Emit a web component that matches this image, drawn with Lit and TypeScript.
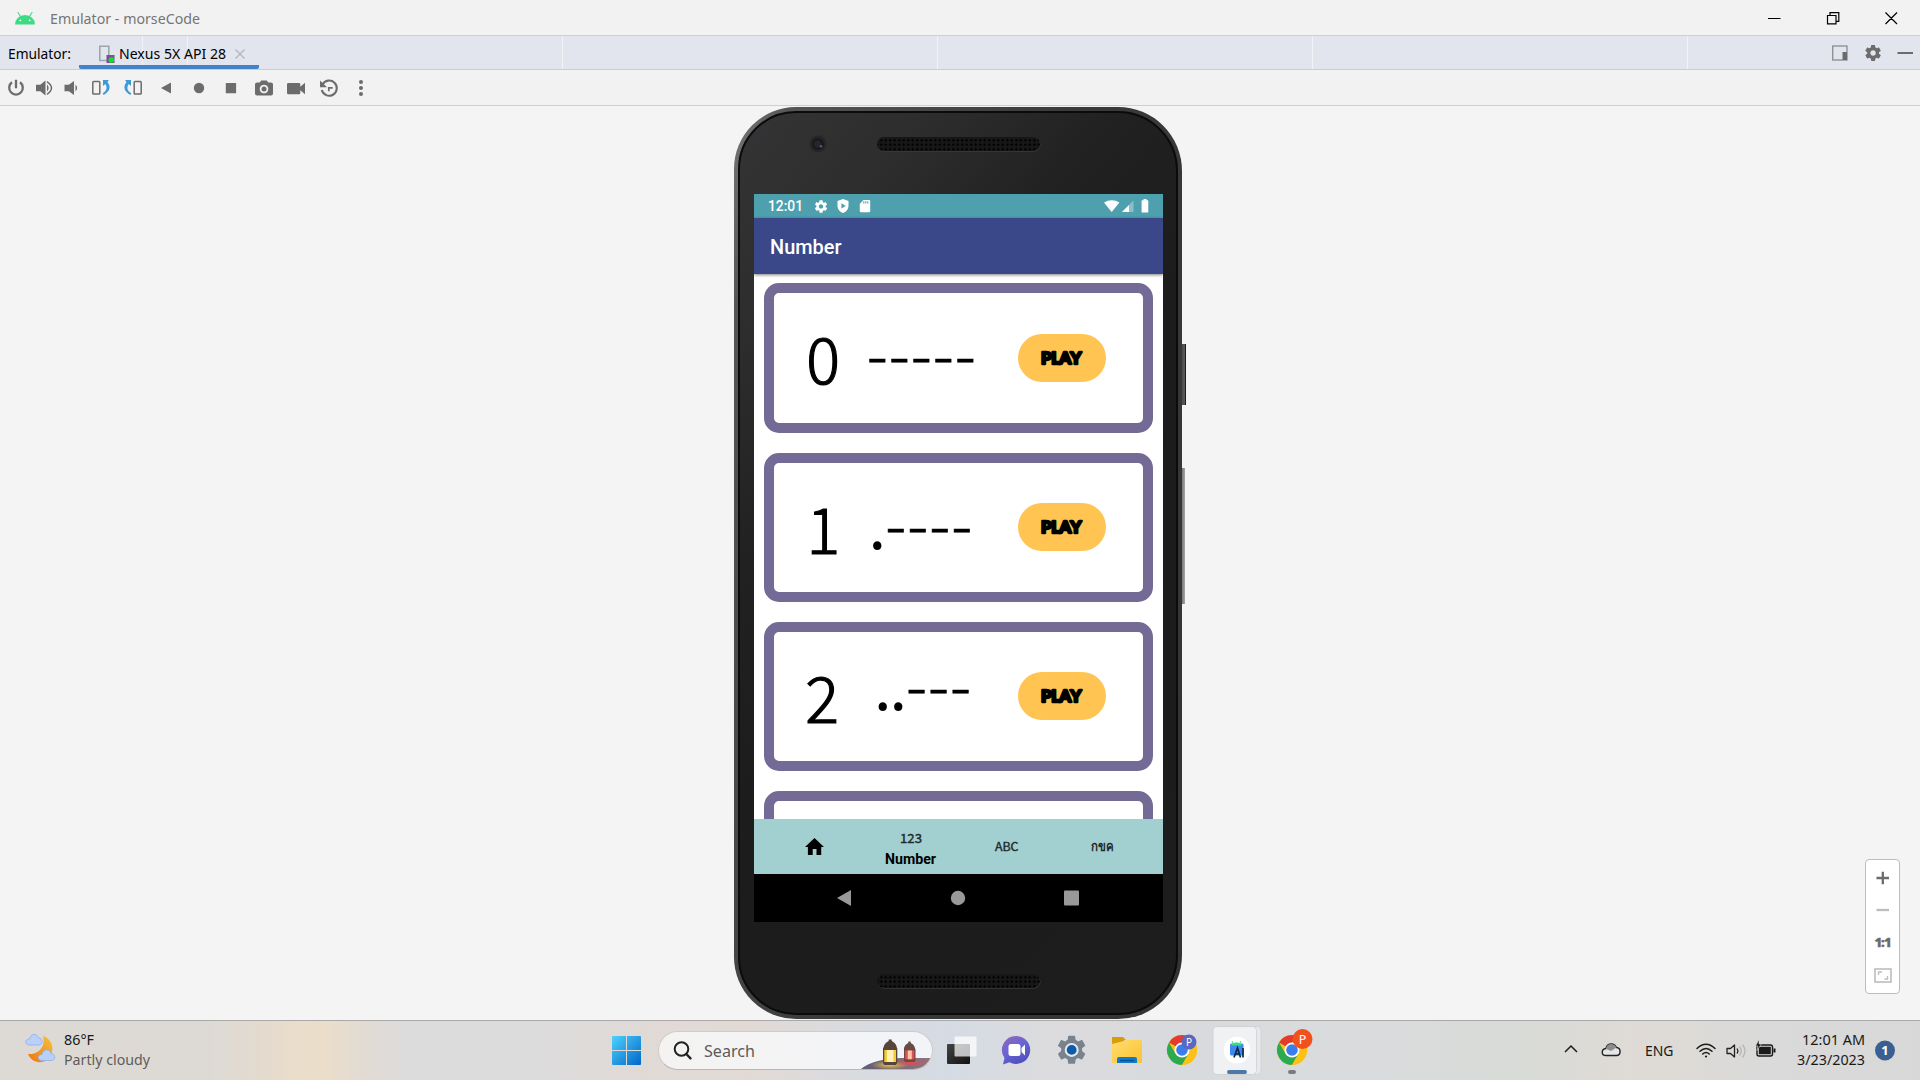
import { LitElement, html, svg, css } from "lit";
import { customElement, property } from "lit/decorators.js";

/** One line of text set to a known advance width; baseline sits 16px below the top. */
const label = (text: string, width: number, size: number, cls = "") => html`
  <svg class="label ${cls}" width=${width} height="22" viewBox="0 0 ${width} 22">
    <text x="0" y="16" font-size=${size} textLength=${width} lengthAdjust="spacingAndGlyphs">${text}</text>
  </svg>`;

const icon = (w: number, h: number, body: unknown, cls = "") => html`
  <svg class="icon ${cls}" width=${w} height=${h} viewBox="0 0 ${w} ${h}">${body}</svg>`;

const labelStyles = css`
  svg { display: block; flex: none; overflow: visible; }
  .label text { fill: currentColor; }
`;

const GEAR = "M19.43 12.98c.04-.32.07-.64.07-.98s-.03-.66-.07-.98l2.11-1.65c.19-.15.24-.42.12-.64l-2-3.46c-.12-.22-.39-.3-.61-.22l-2.49 1c-.52-.4-1.08-.73-1.69-.98l-.38-2.65C14.46 2.18 14.25 2 14 2h-4c-.25 0-.46.18-.49.42l-.38 2.65c-.61.25-1.17.59-1.69.98l-2.49-1c-.23-.09-.49 0-.61.22l-2 3.46c-.13.22-.07.49.12.64l2.11 1.65c-.04.32-.07.65-.07.98s.03.66.07.98l-2.11 1.65c-.19.15-.24.42-.12.64l2 3.46c.12.22.39.3.61.22l2.49-1c.52.4 1.08.73 1.69.98l.38 2.65c.03.24.24.42.49.42h4c.25 0 .46-.18.49-.42l.38-2.65c.61-.25 1.17-.59 1.69-.98l2.49 1c.23.09.49 0 .61-.22l2-3.46c.12-.22.07-.49-.12-.64l-2.11-1.65zM12 15.5c-1.93 0-3.5-1.57-3.5-3.5s1.57-3.5 3.5-3.5 3.5 1.57 3.5 3.5-1.57 3.5-3.5 3.5z";

interface Code { digit: string; center: number; dots: number[]; dashes: number[]; baseline: number; }

@customElement("morse-card")
export class MorseCard extends LitElement {
  @property({ attribute: false }) code?: Code;
  static styles = [labelStyles, css`
    :host { display: block; flex: none; box-sizing: border-box; width: 389px; height: 149.2px; border: 10px solid #736a95; border-radius: 15px; background: #fff; }
    .row { display: grid; grid-template-columns: 70px 174px 87.5px; height: 100%; }
    .play { margin-top: 40.3px; height: 48px; border-radius: 24px; background: #ffc451; display: flex; justify-content: center; align-items: center; }
    .play text { font: 900 17px "Lato", sans-serif; fill: #000; stroke: #000; stroke-width: 2.4px; stroke-linejoin: round; }
    .code { font-family: "Noto Sans CJK SC", sans-serif; fill: #000; }
    .code text { font-size: 63px; }
    .code .digit { font-weight: 300; stroke: #000; stroke-width: 1.2px; }
    .code .dash { font-weight: 300; stroke: #000; stroke-width: .6px; }
  `];
  render() {
    if (!this.code) return html``;
    const { digit, center, dots, dashes, baseline } = this.code;
    return html`<div class="row">
      <svg width="70" height="129" viewBox="0 0 70 129" class="code">
        <text class="digit" x=${center} y="90.9" text-anchor="middle">${digit}</text>
      </svg>
      <svg width="174" height="129" viewBox="0 0 174 129" class="code">
        ${dots.length ? svg`<text x=${dots.join(" ")} y=${baseline}>${".".repeat(dots.length)}</text>` : ""}
        <text class="dash" x=${dashes.join(" ")} y=${baseline - 1}>${"-".repeat(dashes.length)}</text>
      </svg>
      <div class="play">
        <svg width="41" height="18" viewBox="0 0 41 18"><text x="0 10.300 18.300 29.300" y="15.300">PLAY</text></svg>
      </div>
    </div>`;
  }
}

@customElement("phone-device")
export class PhoneDevice extends LitElement {
  static styles = [labelStyles, css`
    :host { display: block; position: relative; width: 448px; height: 912px; }
    .key { position: absolute; left: 448px; background: linear-gradient(90deg, #4c4a4c 0, #5c5a5c 70%, #1a1a1a 76%); }
    .power { top: 237px; width: 4px; height: 61px; }
    .volume { top: 361px; width: 3px; height: 136px; background: linear-gradient(90deg, #777, #a5a5a5); }
    .body { position: relative; box-sizing: border-box; height: 912px; padding: 0 19px 0 20px; border-radius: 62px 64px 64px 62px; display: flex; flex-direction: column;
      background: linear-gradient(105deg, #777 0, #555 8%, #3a3a3a 50%, #333 100%); }
    .glass { position: absolute; inset: 4px; border-radius: 58px 60px 60px 58px; border: 2px solid #0b0b0b; background: linear-gradient(130deg, #343436 0, #2d2d2d 16%, #212121 32%, #1c1c1c 50%, #1d1d1d 100%); }
    .top { position: relative; height: 87px; flex: none; }
    .cam { position: absolute; left: 55px; top: 28px; }
    .speaker { position: absolute; left: 123px; width: 163px; height: 14px; border-radius: 7px; background: radial-gradient(circle, #000 0 1px, transparent 1.3px) 2px 1px / 4.5px 4.5px, #171717; box-shadow: 0.5px 0.7px 0 #3a3a3a; }
    .top .speaker { top: 30px; }
    .bottom { position: relative; flex: 1; }
    .bottom .speaker { top: 52px; }
    .screen { position: relative; width: 409px; height: 728px; flex: none; display: flex; flex-direction: column; background: #fff; overflow: hidden; }
    .status { height: 24px; flex: none; background: #4fa0ae; display: flex; align-items: center; padding: 0 14px; box-sizing: border-box; color: #fff; font-family: Roboto, sans-serif; font-weight: 500; }
    .status .label { margin-top: 0; margin-right: 9px; }
    .status .icon { margin-right: 4px; }
    .status .wifi { margin-right: 2px; }
    .status .signal { margin-right: 5.500px; }
    .status .battery { margin-right: 0.500px; }
    .spacer { flex: 1; }
    .appbar { position: relative; height: 55.5px; flex: none; box-sizing: border-box; background: #3a4889; padding: 19.5px 16px; color: #fff; font: 500 20px Roboto, sans-serif; box-shadow: 0 1px 3px rgba(0,0,0,.5); }
    .list { flex: 1; min-height: 0; overflow: hidden; display: flex; flex-direction: column; gap: 20px; padding: 9.9px 10px 0; }
    .tabs { height: 55.3px; flex: none; background: #a2cfcf; display: grid; grid-template-columns: 25px 71px 121px 71px 121px; color: #1f2b2c; }
    .tab { display: flex; flex-direction: column; align-items: center; justify-content: center; box-sizing: border-box; }
    .stack { padding-top: 4.300px; }
    .tnum { margin-top: -1px; font-family: Roboto, sans-serif; font-weight: 700; color: #000; }
    .t123, .abc { font-family: "Noto Sans CJK SC", sans-serif; font-weight: 400; stroke: #1f2b2c; stroke-width: .4px; }
    .thai { font-weight: 700; stroke: none; }
    .nav { height: 48px; flex: none; background: #000; }
  `];
  private codes: (Code | undefined)[] = [
    { digit: "0", center: 49, dots: [], dashes: [22.8, 44.8, 66.8, 88.8, 110.8], baseline: 86 },
    { digit: "1", center: 49.3, dots: [24.6], dashes: [41.3, 63.3, 85.3, 107.3], baseline: 86 },
    { digit: "2", center: 48, dots: [30, 45.4], dashes: [62, 84, 106], baseline: 78.4 },
    undefined,
  ];
  render() {
    return html`
      <div class="key power"></div><div class="key volume"></div>
      <div class="body">
        <div class="glass"></div>
        <div class="top">
          <svg class="cam" width="18" height="18"><circle cx="9" cy="9" r="8.5" fill="#262626"/><circle cx="9" cy="9" r="6" fill="#19191d"/><circle cx="8.5" cy="9" r="3.5" fill="#25252e"/><circle cx="12" cy="11.2" r="1.3" fill="#74505a"/></svg>
          <div class="speaker"></div>
        </div>
        <div class="screen">
          <div class="status">
            ${label("12:01", 35, 14.5)}
            ${icon(18, 18, svg`<g transform="translate(1.600 2) scale(.62)"><path fill="#fff" d=${GEAR}/></g>`)}
            ${icon(18, 18, svg`<path fill="#fff" fill-rule="evenodd" d="M9 2 14.5 4.1V9c0 3.3-2.2 5.9-5.5 7C5.700 14.900 3.500 12.300 3.500 9V4.100zM7.400 6.200v5.400l4.400-2.700z"/>`)}
            ${icon(18, 18, svg`<path fill="#fff" d="M7.500 3H13q1.200 0 1.200 1.200V14q0 1.200-1.200 1.200H5Q3.800 15.200 3.800 14V6.700z"/><path d="M7.800 4.200v2.400m2-2.400v2.400m2-2.400v2.400" stroke="#4fa0ae" stroke-width="1"/>`)}
            <span class="spacer"></span>
            ${icon(16, 14, svg`<path fill="#fff" d="M0 3.600C4.600.3 11 .3 15.400 3.600L7.700 13z"/>`, "wifi")}
            ${icon(13, 14, svg`<path fill="#8cc0c8" d="M11.500 1.500V13H0z"/><path fill="#fff" d="M7 6v7H0z"/>`, "signal")}
            ${icon(8, 14, svg`<path fill="#fff" d="M2.500 0h3v1.300h1.200q.6 0 .6.6V13q0 .600-.600.600H1.200Q.600 13.600.600 13V1.900q0-.6.6-.6h1.300z"/>`, "battery")}
          </div>
          <div class="appbar">${label("Number", 71.500, 20.5)}</div>
          <div class="list">${this.codes.map(c => html`<morse-card .code=${c}></morse-card>`)}</div>
          <div class="tabs">
            <span></span>
            <div class="tab">${icon(19, 17, svg`<path fill="#000" d="M7.700 17v-6h3.800v6h4.700V9h2.800L9.500 0 0 9h2.900v8z"/>`)}</div>
            <div class="tab stack">${label("123", 22, 12.7, "t123")}${label("Number", 51, 14, "tnum")}</div>
            <div class="tab abc">${label("ABC", 23.500, 11.3)}</div>
            <div class="tab abc">${label("กขค", 23, 13, "thai")}</div>
          </div>
          <svg class="nav" width="409" height="48" fill="#999"><path d="M83 24 97 16V32z"/><circle cx="204" cy="24" r="7.200"/><rect x="310" y="16.500" width="15" height="15" rx="1"/></svg>
        </div>
        <div class="bottom"><div class="speaker"></div></div>
      </div>`;
  }
}

const chrome = svg`
  <circle cx="15" cy="15" r="15" fill="#fbc116"/>
  <path d="M15 15 2 7.500A15 15 0 0 1 28 7.500L28 7.500H15z" fill="#e33b2e"/>
  <path d="M2 7.500A15 15 0 0 0 15 30L21.500 18.700 15 15 8.500 18.700z" fill="#2da94f"/>
  <path d="M15 7.500H28A15 15 0 0 1 15 30L21.500 18.700z" fill="#fbc116"/>
  <circle cx="15" cy="15" r="7.500" fill="#fff"/><circle cx="15" cy="15" r="5.800" fill="#3b7ded"/>`;

@customElement("task-bar")
export class TaskBar extends LitElement {
  static styles = [labelStyles, css`
    :host { display: flex; box-sizing: border-box; height: 60px; border-top: 1px solid #a9a9a9; position: relative; font-family: "Noto Sans", sans-serif; color: #191919;
      background: linear-gradient(90deg, #dddad6 0, #dddad5 210px, #e3dacf 255px, #eaddc9 300px, #e9ddcb 330px, #e2dbd4 365px, #dcdcdd 410px, #dcdcdd 520px, #e0dad7 640px, #e2d9d4 750px, #dadbdf 840px, #d5dbe4 950px, #dcdbdd 1050px, #d8dadd 1180px, #dadbdc 1400px, #d8dbd7 1520px, #dfdad5 1640px, #dadada 1760px, #d8d8d8 1920px); }
    .weather { width: 612px; box-sizing: border-box; display: flex; padding-left: 24px; }
    .weather > .icon { margin: 13px 8px 0 0; }
    .lines { display: flex; flex-direction: column; padding-top: 8px; }
    .lines .label + .label { margin-top: -2px; }
    .muted { color: #5e5c59; }
    .start { margin: 15px 17px 0 0; }
    .search { width: 274.5px; height: 39px; box-sizing: border-box; margin-top: 9.500px; border: 1px solid #cfcdcb; border-bottom-color: #b9b7b6; border-radius: 20px; background: linear-gradient(90deg, #f4f3f2, #f2f4f8); display: flex; align-items: center; padding-left: 14px; overflow: hidden; color: #5b5b5b; }
    .search .label { margin: 3px 0 0 12px; }
    .search .icon { margin-top: 1px; }
    .lamps { margin-left: auto; margin-right: -1px; align-self: flex-end; }
    .apps { display: flex; margin-left: 1.500px; }
    .tray { margin-left: auto; display: flex; padding-right: 25px; }
    .tray > .icon { margin-top: 18px; }
    .tray > .speaker { margin-left: 1px; }
    .tray > .power { margin: 17px 0 0 2px; }
    .tray .eng { margin-top: 18.500px; }
    .clock { align-items: flex-end; margin: 0 10px 0 19px; }
    .badge { font: 700 13px "Noto Sans", sans-serif; fill: #fff; }
  `];
  render() {
    const cloud = (x: number, y: number) => svg`<path transform="translate(${x} ${y})" d="M4 11C-1 11-1 5 4 5 5-1 12-1 13 4c5 0 5 7 0 7z" fill="#b8d0fa" stroke="#8fadea" stroke-width=".8"/>`;
    return html`
      <div class="weather">
        ${icon(32, 30, svg`<defs><linearGradient id="m" x1="1" y1="0" x2="0" y2="1"><stop stop-color="#f4c33c"/><stop offset="1" stop-color="#ee7412"/></linearGradient></defs>
          <path d="M19 2C30 6 31 18 24 25 17 31 7 28 4 20 15 21 22 12 19 2z" fill="url(#m)"/>${cloud(1.500, 0)}${cloud(14, 15.500)}`)}
        <div class="lines">${label("86°F", 30, 14.7)}${label("Partly cloudy", 86, 14.7, "muted")}</div>
      </div>
      ${icon(29, 29, svg`<defs><linearGradient id="w" gradientUnits="userSpaceOnUse" x1="0" y1="0" x2="29" y2="29"><stop stop-color="#4dd2fd"/><stop offset="1" stop-color="#0067c8"/></linearGradient></defs>
        <path fill="url(#w)" d="M1 0H14V14H0V1Q0 0 1 0zM15 0H28Q29 0 29 1V14H15zM0 15H14V29H1Q0 29 0 28zM15 15H29V28Q29 29 28 29H15z"/>`, "start")}
      <div class="search">
        ${icon(19, 19, svg`<circle cx="8.500" cy="8" r="6.800" fill="none" stroke="#222" stroke-width="2"/><path d="M13.300 13 17.500 17.300" stroke="#222" stroke-width="2.400" stroke-linecap="round"/>`)}
        ${label("Search", 51, 16.3)}
        <svg class="lamps" width="72" height="38" viewBox="0 0 72 38">
          <defs><radialGradient id="y"><stop stop-color="#e8c243"/><stop offset="1" stop-color="#e8c243" stop-opacity="0"/></radialGradient>
          <radialGradient id="r"><stop stop-color="#e84c50"/><stop offset="1" stop-color="#e84c50" stop-opacity="0"/></radialGradient>
          <linearGradient id="g" x2="1"><stop stop-color="#625d74"/><stop offset="1" stop-color="#94737c"/></linearGradient></defs>
          <path d="M0 38Q12 28 40 27H72L66 38z" fill="url(#g)"/>
          <ellipse cx="29" cy="34" rx="19" ry="4.500" fill="url(#y)"/><ellipse cx="49" cy="31.500" rx="16" ry="4" fill="url(#r)"/>
          <path d="M27.700 10V8.500h3V10q4.500 2 5.300 7H22.300q.900-5 5.400-7zM22 17h14.300v15l-1.500 2H23.500l-1.500-2z" fill="#57443a"/><path d="M23.300 19h11.700v12H23.300z" fill="#f5cb3c"/><path d="M26 19h6.500v12h-6.500z" fill="#fff2b4"/>
          <path d="M47.300 12v-1.500h2.400V12q3.800 1.700 4.500 6H42.800q.700-4.300 4.500-6zM43 18h11.500v11.500l-1 1.500H44l-1-1.500z" fill="#684b47"/><path d="M44.200 19.500h9v8.800h-9z" fill="#e2504f"/><path d="M46.800 19.500h4v8.800h-4z" fill="#ffc4a4"/>
        </svg>
      </div>
      <div class="apps">
        ${icon(55, 59, svg`<defs><linearGradient id="b" x2="1" y2="1"><stop stop-color="#444"/><stop offset="1" stop-color="#111"/></linearGradient></defs><rect x="13" y="23" width="23" height="20" rx="1" fill="url(#b)"/><rect x="20.500" y="15.500" width="22" height="20" rx="1" fill="#fff" opacity=".72"/>`)}
        ${icon(55, 59, svg`<defs><linearGradient id="c" x1="0" y1="0" x2=".6" y2="1"><stop stop-color="#9069b7"/><stop offset=".5" stop-color="#6b64d4"/><stop offset="1" stop-color="#4e51bd"/></linearGradient></defs><path d="M27.500 15a14 14 0 1 1-7 26.300L14 43.500 15.500 37A14 14 0 0 1 27.500 15z" fill="url(#c)"/><rect x="19.500" y="23" width="12" height="12" rx="2.500" fill="#fff"/><path d="M32.500 27 36 23.500V34.500L32.500 31z" fill="#fff"/>`)}
        ${icon(55, 59, svg`<g transform="translate(11.300 12.500) scale(1.400)"><path transform="translate(-.35 -.4)" d=${GEAR} fill="#78838e"/><circle cx="11.700" cy="11.700" r="5" fill="#e5e9ec"/><circle cx="11.700" cy="11.700" r="3.500" fill="#0d5cab"/></g>`)}
        ${icon(55, 59, svg`<defs><linearGradient id="f" y2="1"><stop stop-color="#ffdd70"/><stop offset="1" stop-color="#fbc22e"/></linearGradient></defs><path d="M13 16h11l3 3h-2v5H13z" fill="#dc9b08"/><path d="M13 23 25 20 27 19H43V42H13z" fill="url(#f)"/><path d="M18 42V38q0-2 2-2H36q2 0 2 2V42z" fill="#0f7bd0"/><path d="M21 39.500H35" stroke="#075089" stroke-width="1.200"/>`)}
        ${icon(55, 59, svg`<g transform="translate(13 14)">${chrome}</g><circle cx="35" cy="21" r="7.500" fill="#5b67c0"/><text x="35" y="24.500" text-anchor="middle" font-size="10" fill="#fff">P</text>`)}
        ${icon(55, 59, svg`<rect x="6" y="5.500" width="46" height="48" rx="4" fill="#e6e8eb" stroke="#cfd1d4" stroke-width=".8"/><rect x="4" y="5.500" width="43.500" height="48" rx="4" fill="#f0f1f3" stroke="#cccfd2" stroke-width=".8"/>
          <circle cx="28" cy="29" r="13.300" fill="#fff"/><rect x="21" y="22.500" width="13.500" height="12" rx="1.500" fill="#3f86ee"/><path d="M21.500 24.500q6-6.500 12 0z" fill="#3ddc84"/><path d="m23 20 1.500 3M32 20l-1.500 3" stroke="#3ddc84"/><path d="m25 36.500 3.500-9.500 3 9.500M26.500 33h4M34 27v9.500" stroke="#0b2c45" stroke-width="1.700" fill="none"/>
          <rect x="18" y="49" width="20" height="4" rx="2" fill="#4b7aa8"/>`)}
        ${icon(55, 59, svg`<g transform="translate(13 14)">${chrome}</g><circle cx="38.500" cy="18" r="10" fill="#f2511d"/><text x="38.500" y="22.500" text-anchor="middle" font-size="12.500" fill="#fff">P</text><rect x="24" y="49" width="8" height="4" rx="2" fill="#7b7c7e"/>`)}
      </div>
      <div class="tray">
        ${icon(50, 24, svg`<path d="m10 13 6-6 6 6" fill="none" stroke="#1c1c1c" stroke-width="1.500"/>`)}
        ${icon(40, 24, svg`<g transform="translate(-5 0)"><path d="M6 16.500C1 16.500 1 10 6 9.500 7 4 14 3.500 16.500 8.500c5 0 4.500 8 0 8z" fill="#e4e5e7" stroke="#222" stroke-width="1.400"/><path d="M6 9.500C7 4 14 3.500 16.500 8.500L11 12 6 9.700z" fill="#8b8c8e"/></g>`)}
        ${label("ENG", 28.5, 14.8, "eng")}
        ${icon(48, 24, svg`<g transform="translate(23 0)" fill="none" stroke="#1c1c1c" stroke-width="1.500" stroke-linecap="round"><path d="M1 9.500q9-8.500 18 0M4 12.300q6-5.500 12 0M6.700 15q3.300-3 6.600 0"/><circle cx="10" cy="17.500" r="1.100" fill="#1c1c1c" stroke="none"/></g>`)}
        ${icon(28, 24, svg`<path d="M5 9.500H8.500L12.500 6V18L8.500 14.500H5z" fill="none" stroke="#222" stroke-width="1.300" stroke-linejoin="round"/><path d="M15 9.500q1.800 2.500 0 5" fill="none" stroke="#222" stroke-width="1.200"/><path d="M17.500 7.500q3.500 4.500 0 9M20.500 5.500q5 6.500 0 13" fill="none" stroke="#b6b6b6" stroke-width="1.300"/>`, "speaker")}
        ${icon(26, 24, svg`<rect x="5" y="7" width="15.500" height="11" rx="2" fill="none" stroke="#1a1a1a" stroke-width="1.400"/><rect x="6.800" y="8.800" width="12" height="7.400" rx=".5" fill="#1a1a1a"/><path d="M21.500 10.500h2v4h-2z" fill="#1a1a1a"/><path d="M7 1.500 3.500 8H6L5 12.500 9.500 6H7z" fill="#1a1a1a" stroke="#dadada" stroke-width=".6"/>`, "power")}
        <div class="lines clock">${label("12:01 AM", 63, 14.7)}${label("3/23/2023", 68, 14.7)}</div>
        ${icon(20, 24, svg`<circle cx="10" cy="11.500" r="10" fill="#3b5f91"/><text class="badge" x="10" y="16" text-anchor="middle">1</text>`)}
      </div>`;
  }
}

@customElement("app-root")
export class AppRoot extends LitElement {
  static styles = [labelStyles, css`
    :host { display: flex; flex-direction: column; width: 1920px; height: 1080px; background: #f4f4f4; overflow: hidden; font-family: "Noto Sans", sans-serif; }
    .title { height: 36px; flex: none; box-sizing: border-box; background: #f2f2f2; border-bottom: 1px solid #cfcfcf; display: flex; padding: 0 12px 0 15px; color: #757575; }
    .title > .icon { margin-top: 11px; }
    .title .label { margin: 8px 0 0 15px; }
    .win { margin-left: auto; display: flex; }
    .tabbar { height: 34px; flex: none; box-sizing: border-box; border-bottom: 1px solid #cdcdcf; color: #000; display: flex; padding: 0 4px 0 8px;
      background: repeating-linear-gradient(90deg, #f2f3f6 0 1px, transparent 1px 375px) 187px 0, #e2e5ed; }
    .tabbar > .label { margin-top: 7px; }
    .tab { margin-left: 8px; width: 180px; box-sizing: border-box; padding: 0 13px 0 20px; display: flex; border-bottom: 4px solid #4083c9; border-radius: 0 0 2px 2px; }
    .tab .label { margin: 7px 9px 0 4px; }
    .tab .icon { margin-top: 9px; }
    .tools { margin-left: auto; display: flex; }
    .toolbar { height: 36px; flex: none; box-sizing: border-box; background: #f2f2f2; border-bottom: 1px solid #cfcfcf; display: grid; align-items: center; justify-items: center; grid-template-columns: 32px 24px 30px 30px 34px repeat(7, 32.500px); }
    .canvas { position: relative; height: 914px; flex: none; display: flex; justify-content: center; box-sizing: border-box; padding: 1px 4px 0 0; }
    .zoom { position: absolute; right: 20px; top: 753px; width: 35px; height: 135px; box-sizing: border-box; border: 1px solid #bdbdbd; border-radius: 4px; background: #fff; }
    .zoom text { font: 800 13px "Open Sans", sans-serif; fill: #6b6b6b; stroke: #6b6b6b; stroke-width: .3px; }
  `];
  render() {
    const g = "#6c6c6c";
    const rotate = svg`<rect x=".800" y="2.600" width="7" height="12.500" rx=".8" fill="none" stroke="${g}" stroke-width="1.500"/><path d="M11 1H16.800L15.500 3.300C19.500 8 17.500 13 11.500 16L10.800 14.300C15 11.500 15.500 8.500 13.300 5L11 7z" fill="#3a9bd6"/>`;
    return html`
      <div class="title">
        ${icon(20, 14, svg`<path d="M0 13.500a10 9.500 0 0 1 20 0z" fill="#3ddc84"/><path d="m3 1.500 2.500 4M17 1.500l-2.500 4" stroke="#3ddc84" stroke-width="1.100" stroke-linecap="round"/><circle cx="5.300" cy="9.300" r=".9" fill="#fff"/><circle cx="14.700" cy="9.300" r=".9" fill="#fff"/>`)}
        ${label("Emulator - morseCode", 150, 14.6)}
        <div class="win">
          ${icon(160, 35, svg`<g fill="none" stroke="#000" stroke-width="1.200"><path d="M20 18.500h12.500M79.500 15.500h8.500v8.300h-8.500zM82 15v-2.300h8.800v8.600H88.500M137.500 12.500l11.500 11.500M149 12.500 137.500 24"/></g>`)}
        </div>
      </div>
      <div class="tabbar">
        ${label("Emulator:", 63, 14.600)}
        <div class="tab">
          ${icon(16, 18, svg`<path d="M.800 1.300h9v14.200h-9z" fill="none" stroke="#9aa7b0" stroke-width="1.600"/><rect x="7.500" y="10" width="8" height="8" fill="#7d4e9c"/><circle cx="12.300" cy="15" r="2.700" fill="#0be817"/>`)}
          ${label("Nexus 5X API 28", 107, 14.600)}
          ${icon(10, 18, svg`<path d="m.500 4.500 9 9M9.500 4.500l-9 9" stroke="#b3b6bc" stroke-width="1.300"/>`)}
        </div>
        <div class="tools">
          ${icon(88, 33, svg`<rect x="4.700" y="10" width="14.300" height="14" fill="none" stroke="#8d8d90" stroke-width="1.300"/><path d="M14.500 16h4.500v8h-4.500z" fill="${g}"/><g transform="translate(35.600 7.500) scale(.79)"><path d=${GEAR} fill="${g}"/></g><path d="M69.500 17H85" stroke="${g}" stroke-width="2"/>`)}
        </div>
      </div>
      <div class="toolbar">
        ${icon(18, 18, svg`<path d="M5 3.300a6.800 6.800 0 1 0 8 0M9 .800v8.500" fill="none" stroke="${g}" stroke-width="2.300"/>`)}
        ${icon(18, 18, svg`<path d="M1 5.700H5.300L10.500 1.500V16.500L5.300 12.300H1z" fill="${g}"/><path d="M12 5.500q3.300 3.500 0 7z" fill="${g}"/><path d="M12 2.700q9 6.300 0 12.600" fill="none" stroke="${g}" stroke-width="1.500"/>`)}
        ${icon(18, 18, svg`<path d="M2.500 5.700H6.800L12 2V16L6.800 12.300H2.500z" fill="${g}"/><path d="M13.500 5.500q3.300 3.500 0 7z" fill="${g}"/>`)}
        ${icon(18, 18, rotate)}
        ${icon(18, 18, svg`<g transform="translate(18 0) scale(-1 1)">${rotate}</g>`)}
        ${icon(18, 18, svg`<path d="M4 9 14 3.500V14.500z" fill="${g}"/>`)}
        ${icon(18, 18, svg`<circle cx="9" cy="9" r="5.200" fill="${g}"/>`)}
        ${icon(18, 18, svg`<rect x="3.800" y="4" width="10.300" height="10.300" rx=".5" fill="${g}"/>`)}
        ${icon(18, 18, svg`<path fill-rule="evenodd" d="M2 3.500H4.700L6.200 1.500H11.800L13.300 3.500H16Q18 3.500 18 5.500V14.500Q18 16.500 16 16.500H2Q0 16.500 0 14.500V5.500Q0 3.500 2 3.500zM9 5.700a4.300 4.300 0 1 0 .01 0z" fill="${g}"/><circle cx="9" cy="10" r="2.500" fill="${g}"/>`)}
        ${icon(18, 18, svg`<path d="M1.500 4H12q1.300 0 1.300 1.300V7.700L18 3.800V15.200L13.300 11.300V14q0 1.300-1.300 1.300H1.500Q0 15.300 0 14V5.300Q0 4 1.500 4z" fill="${g}"/>`)}
        ${icon(18, 18, svg`<path d="M2.500 5.500a7.600 7.600 0 1 1-.7 5.500" fill="none" stroke="${g}" stroke-width="2.100"/><path d="M0 1.500V8.200H7z" fill="${g}"/><path d="M8.800 12.300V8.800H12.700" fill="none" stroke="${g}" stroke-width="1.700"/>`)}
        ${icon(18, 18, svg`<g fill="${g}"><circle cx="9" cy="3" r="2"/><circle cx="9" cy="9" r="2"/><circle cx="9" cy="15" r="2"/></g>`)}
      </div>
      <div class="canvas">
        <phone-device></phone-device>
        <div class="zoom">
          <svg width="33" height="133" viewBox="0 0 33 133"><path d="M10.500 18H23M16.800 11.800V24.300" stroke="#6b6b6b" stroke-width="2.300"/><path d="M10.500 50H23" stroke="#bdbdbd" stroke-width="2.300"/>
          <text x="8.500 15 18" y="87.300">1:1</text>
          <rect x="9" y="109" width="16" height="13" fill="none" stroke="#bdbdbd" stroke-width="1.600"/><path d="M12.500 115v-3H16M18.500 119H21.500v-3" fill="none" stroke="#bdbdbd" stroke-width="1.300"/></svg>
        </div>
      </div>
      <task-bar></task-bar>`;
  }
}
